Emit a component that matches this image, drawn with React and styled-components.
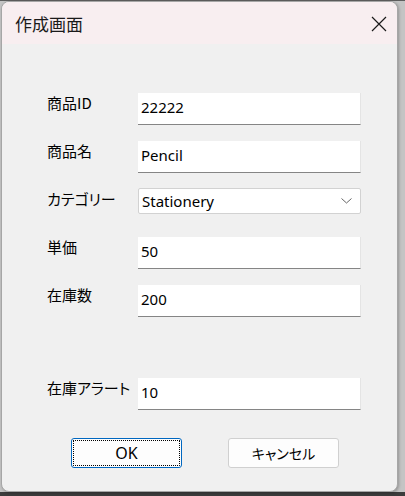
import React from 'react';
import styled, { createGlobalStyle } from 'styled-components';

const GlobalStyle = createGlobalStyle`
  html, body {
    margin: 0;
    padding: 0;
  }
  body {
    background: #3c3c3c;
    font-family: "Noto Sans", "Noto Sans CJK JP", sans-serif;
  }
`;

const Desktop = styled.div`
  box-sizing: border-box;
  width: 405px;
  height: 496px;
  padding-left: 1px;
  background: #c4c4c4;
  border-top: 1px solid #5e5e5e;
  border-bottom: 4px solid #3c3c3c;
  display: flex;
  align-items: flex-start;
`;

const Window = styled.div`
  box-sizing: border-box;
  width: 397px;
  height: 491px;
  display: flex;
  flex-direction: column;
  background: #f0f0f0;
  border: 1px solid #a6a6a6;
  border-radius: 8px;
  overflow: hidden;
  box-shadow: 1px 1px 3px rgba(0, 0, 0, 0.25);
`;

const TitleBar = styled.div`
  height: 42px;
  flex: none;
  display: flex;
  align-items: center;
  justify-content: space-between;
  padding: 0 10px 0 13px;
  background: #f8eef0;
`;

const Title = styled.span`
  font-family: "Noto Sans CJK JP", sans-serif;
  font-size: 17px;
  color: #1a1a1a;
  line-height: 1;
  margin-top: 1px;
`;

const CloseButton = styled.button`
  border: 0;
  background: none;
  padding: 0;
  width: 16px;
  height: 16px;
  display: flex;
  margin-top: 2px;
`;

const Body = styled.div`
  flex: 1;
  display: flex;
  flex-direction: column;
  padding: 49px 0 0 45px;
`;

const Form = styled.div`
  display: flex;
  flex-direction: column;
  gap: 16px;
`;

const Row = styled.div`
  display: flex;
  align-items: flex-start;
  height: 32px;
  margin-top: ${p => (p.$spaced ? '45px' : '0')};
`;

const Label = styled.label`
  width: 91px;
  flex: none;
  font-family: "Noto Sans CJK JP", sans-serif;
  font-feature-settings: "palt";
  font-size: 15px;
  line-height: 20px;
  color: #000;
  white-space: nowrap;
`;

const Input = styled.div`
  box-sizing: border-box;
  width: 223px;
  height: 32px;
  padding: 3px 0 0 3px;
  background: #fff;
  border-right: 1px solid #e4e4e4;
  border-bottom: 1px solid #858585;
  font-size: 15px;
  line-height: 22px;
  color: #000;
`;

const Select = styled.div`
  box-sizing: border-box;
  width: 223px;
  height: 26px;
  margin-top: -1px;
  padding: 0 8px 0 3px;
  display: flex;
  align-items: center;
  justify-content: space-between;
  background: #fff;
  border: 1px solid #d2d2d2;
  border-radius: 2px;
  font-size: 15px;
  color: #000;
`;

const Buttons = styled.div`
  display: flex;
  gap: 46px;
  margin: 28px 0 0 24px;
`;

const Button = styled.button`
  box-sizing: border-box;
  width: 111px;
  height: 30px;
  padding: 0;
  display: flex;
  align-items: center;
  justify-content: center;
  background: #fdfdfd;
  border: 1px solid ${p => (p.$focused ? '#0067c0' : '#d0d0d0')};
  border-radius: 3px;
  font-family: ${p => (p.$jp ? '"Noto Sans CJK JP", sans-serif' : '"Noto Sans", sans-serif')};
  font-feature-settings: "palt";
  font-size: ${p => (p.$jp ? '14px' : '16px')};
  color: #000;
  position: relative;
`;

const FocusRing = styled.span`
  position: absolute;
  inset: 1px;
  border: 1px dotted #000;
  border-radius: 1px;
`;

const CloseIcon = () => (
  <svg width="16" height="16" viewBox="0 0 16 16">
    <path d="M1 1 L15 15 M15 1 L1 15" stroke="#1a1a1a" strokeWidth="1.2" fill="none" />
  </svg>
);

const Chevron = () => (
  <svg width="11" height="6" viewBox="0 0 11 6">
    <path d="M0.5 0.5 L5.5 5 L10.5 0.5" stroke="#666" strokeWidth="1" fill="none" />
  </svg>
);

const fields = [
  { label: '商品ID', value: '22222' },
  { label: '商品名', value: 'Pencil' },
  { label: 'カテゴリー', value: 'Stationery', select: true },
  { label: '単価', value: '50' },
  { label: '在庫数', value: '200' },
  { label: '在庫アラート', value: '10', spaced: true },
];

export default function App() {
  return (
    <>
      <GlobalStyle />
      <Desktop>
        <Window>
          <TitleBar>
            <Title>作成画面</Title>
            <CloseButton aria-label="閉じる">
              <CloseIcon />
            </CloseButton>
          </TitleBar>
          <Body>
            <Form>
              {fields.map(f => (
                <Row key={f.label} $spaced={f.spaced}>
                  <Label>{f.label}</Label>
                  {f.select ? (
                    <Select>
                      <span>{f.value}</span>
                      <Chevron />
                    </Select>
                  ) : (
                    <Input>{f.value}</Input>
                  )}
                </Row>
              ))}
            </Form>
            <Buttons>
              <Button $focused>
                <FocusRing />
                OK
              </Button>
              <Button $jp>キャンセル</Button>
            </Buttons>
          </Body>
        </Window>
      </Desktop>
    </>
  );
}
